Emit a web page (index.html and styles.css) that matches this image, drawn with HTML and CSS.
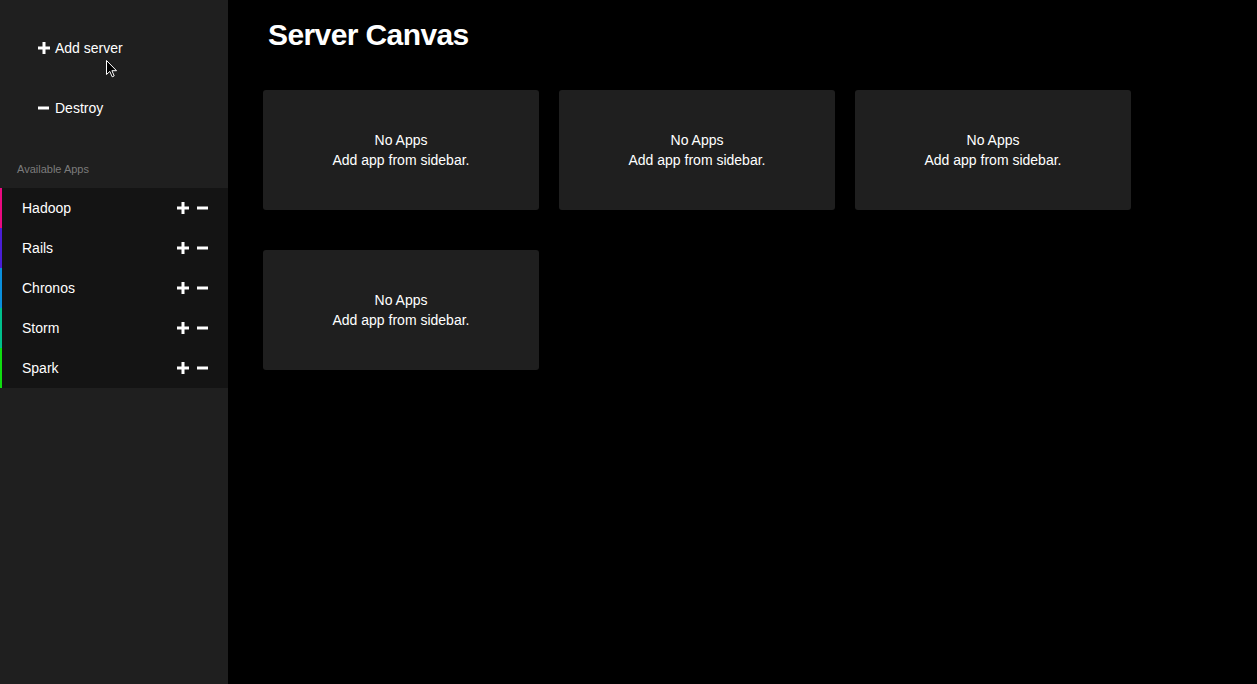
FILE: index.html
```html
<!DOCTYPE html>
<html>
<head>
<meta charset="utf-8">
<title>Server Canvas</title>
<link rel="stylesheet" href="styles.css">
</head>
<body>
<div class="layout">
  <aside class="sidebar">
    <div class="actions">
      <div class="action">
        <svg class="ico" width="12" height="12" viewBox="0 0 12 12"><rect x="4.5" y="0" width="3" height="12" fill="#fff"/><rect x="0" y="4.5" width="12" height="3" fill="#fff"/></svg>
        <span>Add server</span>
      </div>
      <div class="action">
        <svg class="ico" width="12" height="12" viewBox="0 0 12 12"><rect x="0" y="4.5" width="11" height="3" fill="#fff"/></svg>
        <span>Destroy</span>
      </div>
    </div>
    <div class="label">Available Apps</div>
    <ul class="apps">
      <li class="app hadoop"><span>Hadoop</span><span class="ctrls"><svg width="12" height="12" viewBox="0 0 12 12"><rect x="4.5" y="0" width="3" height="12" fill="#fff"/><rect x="0" y="4.5" width="12" height="3" fill="#fff"/></svg><svg width="11" height="12" viewBox="0 0 11 12"><rect x="0" y="4.5" width="11" height="3" fill="#fff"/></svg></span></li>
      <li class="app rails"><span>Rails</span><span class="ctrls"><svg width="12" height="12" viewBox="0 0 12 12"><rect x="4.5" y="0" width="3" height="12" fill="#fff"/><rect x="0" y="4.5" width="12" height="3" fill="#fff"/></svg><svg width="11" height="12" viewBox="0 0 11 12"><rect x="0" y="4.5" width="11" height="3" fill="#fff"/></svg></span></li>
      <li class="app chronos"><span>Chronos</span><span class="ctrls"><svg width="12" height="12" viewBox="0 0 12 12"><rect x="4.5" y="0" width="3" height="12" fill="#fff"/><rect x="0" y="4.5" width="12" height="3" fill="#fff"/></svg><svg width="11" height="12" viewBox="0 0 11 12"><rect x="0" y="4.5" width="11" height="3" fill="#fff"/></svg></span></li>
      <li class="app storm"><span>Storm</span><span class="ctrls"><svg width="12" height="12" viewBox="0 0 12 12"><rect x="4.5" y="0" width="3" height="12" fill="#fff"/><rect x="0" y="4.5" width="12" height="3" fill="#fff"/></svg><svg width="11" height="12" viewBox="0 0 11 12"><rect x="0" y="4.5" width="11" height="3" fill="#fff"/></svg></span></li>
      <li class="app spark"><span>Spark</span><span class="ctrls"><svg width="12" height="12" viewBox="0 0 12 12"><rect x="4.5" y="0" width="3" height="12" fill="#fff"/><rect x="0" y="4.5" width="12" height="3" fill="#fff"/></svg><svg width="11" height="12" viewBox="0 0 11 12"><rect x="0" y="4.5" width="11" height="3" fill="#fff"/></svg></span></li>
    </ul>
    <svg class="cursor" width="12" height="18" viewBox="0 0 12 18"><path d="M0.5 0.5 L0.5 14.5 L3.8 11.4 L6.2 16.8 L8.2 15.9 L5.9 10.7 L10.5 10.7 Z" fill="#000" stroke="#fff" stroke-width="1"/></svg>
  </aside>
  <main class="main">
    <h1 class="title">Server Canvas</h1>
    <div class="grid">
      <div class="card"><div>No Apps</div><div>Add app from sidebar.</div></div>
      <div class="card"><div>No Apps</div><div>Add app from sidebar.</div></div>
      <div class="card"><div>No Apps</div><div>Add app from sidebar.</div></div>
      <div class="card"><div>No Apps</div><div>Add app from sidebar.</div></div>
    </div>
  </main>
</div>
</body>
</html>
```

FILE: styles.css
```css
html, body {
  margin: 0;
  padding: 0;
  background: #000;
  height: 100%;
}
body {
  font-family: "Liberation Sans", Arial, sans-serif;
  color: #fff;
  font-size: 14px;
}
.layout {
  display: flex;
  height: 684px;
}
.sidebar {
  position: relative;
  width: 228px;
  flex: 0 0 228px;
  background: #1f1f1f;
}
.actions {
  display: flex;
  flex-direction: column;
  gap: 20px;
  padding: 28px 0 0 38px;
}
.action {
  height: 40px;
  display: flex;
  align-items: center;
  gap: 5px;
  font-size: 14px;
}
.ico {
  display: block;
}
.label {
  margin: 32px 0 10px 17px;
  height: 18px;
  line-height: 18px;
  font-size: 11px;
  color: #7b7b7b;
}
.apps {
  list-style: none;
  margin: 0;
  padding: 0;
  background: #141414;
}
.app {
  height: 40px;
  display: flex;
  align-items: center;
  justify-content: space-between;
  padding: 0 20px 0 20px;
  border-left: 2px solid transparent;
}
.hadoop { border-left-color: #ea0a80; }
.rails { border-left-color: #4a1ed6; }
.chronos { border-left-color: #0a8fdc; }
.storm { border-left-color: #00c08c; }
.spark { border-left-color: #10dc10; }
.ctrls {
  display: flex;
  align-items: center;
  gap: 8px;
}
.ctrls svg {
  display: block;
}
.cursor {
  position: absolute;
  left: 106px;
  top: 60px;
}
.main {
  flex: 1;
  padding: 20px 0 0 35px;
}
.title {
  margin: 0 0 40px 5px;
  font-size: 30px;
  line-height: 30px;
  font-weight: bold;
  letter-spacing: -0.6px;
}
.grid {
  display: grid;
  grid-template-columns: repeat(3, 276px);
  column-gap: 20px;
  row-gap: 40px;
}
.card {
  height: 120px;
  background: #1f1f1f;
  border-radius: 3px;
  display: flex;
  flex-direction: column;
  align-items: center;
  justify-content: center;
  font-size: 14px;
  line-height: 20px;
}
```
